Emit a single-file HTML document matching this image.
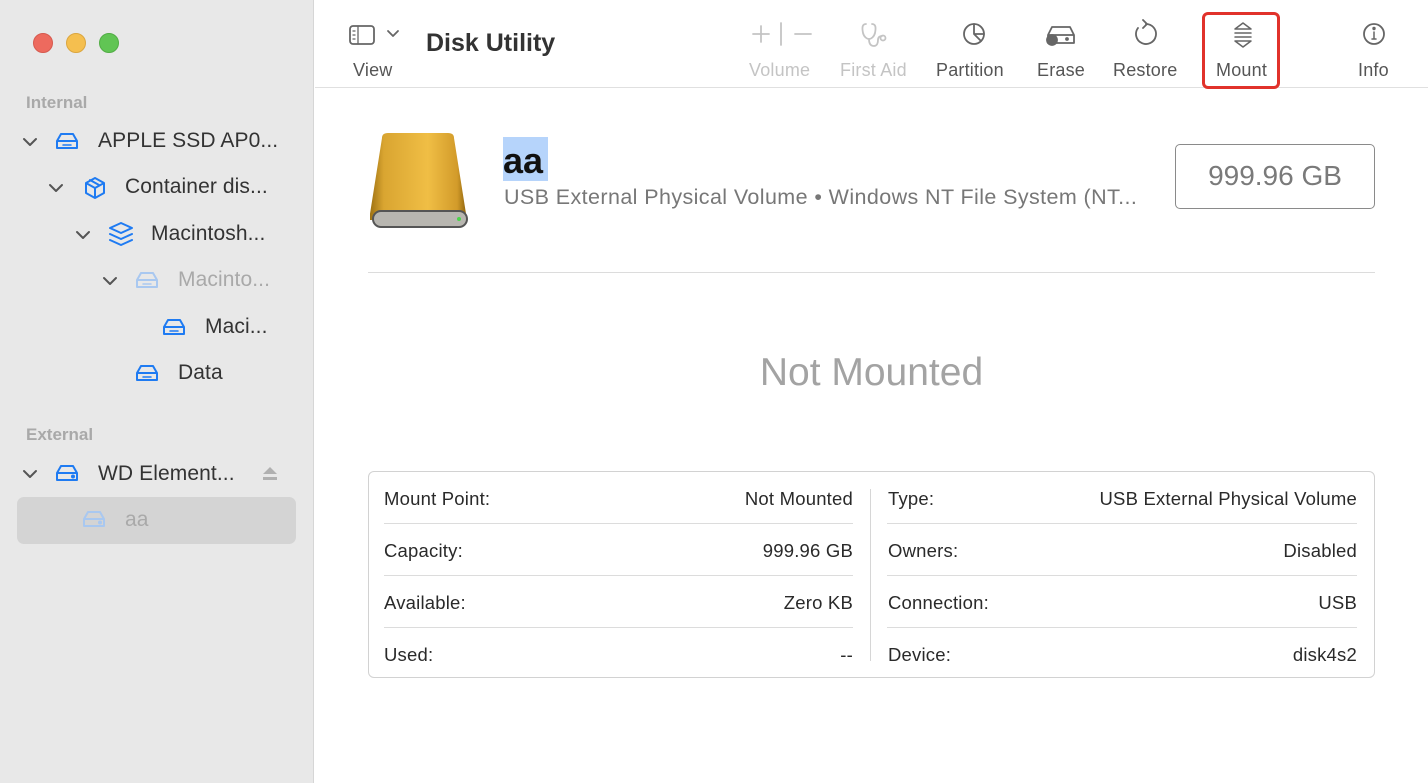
<!DOCTYPE html>
<html><head><meta charset="utf-8"><style>
*{margin:0;padding:0;box-sizing:border-box}
body{width:1428px;height:783px;background:#fff;font-family:"Liberation Sans",sans-serif;position:relative;overflow:hidden;color:#2a2a2a}
.a{position:absolute;white-space:nowrap}
#side{position:absolute;left:0;top:0;width:314px;height:783px;background:#e8e8e8;border-right:1px solid #d6d6d6}
.dot{position:absolute;top:33px;width:20px;height:20px;border-radius:50%}
.sec{font-size:17px;font-weight:bold;color:#a9a9a9}
.it{font-size:21px;color:#333;letter-spacing:0.1px}
.tb{font-size:18px;color:#555;text-align:center;letter-spacing:0.2px}
.dis{color:#c4c4c4}
.row{position:absolute;font-size:18.5px;color:#2a2a2a;letter-spacing:0.2px}
.ln{position:absolute;height:1px;background:#dcdcdc}
</style></head><body>
<div id="side">
<div class="dot" style="left:33px;background:#ed6a5e;border:1px solid #d65a4f"></div>
<div class="dot" style="left:66px;background:#f5bf4f;border:1px solid #dba63f"></div>
<div class="dot" style="left:99px;background:#61c554;border:1px solid #52ad45"></div>
<div class="a sec" style="left:26px;top:93px">Internal</div>
<div class="a sec" style="left:26px;top:425px">External</div>
<div style="position:absolute;left:17px;top:497px;width:279px;height:47px;background:#d4d4d4;border-radius:7px"></div>
</div>

<svg width="314" height="560" style="position:absolute;left:0;top:0" fill="none" stroke-linecap="round" stroke-linejoin="round">
<g stroke="#555" stroke-width="2">
<path d="M24 139l6 6 6-6"/><path d="M50 185l6 6 6-6"/><path d="M77 232l6 6 6-6"/><path d="M104 278l6 6 6-6"/><path d="M24 471l6 6 6-6"/>
</g>
<g stroke="#1f7bf2" stroke-width="2">
<path d="M57 141l4-7h12l4 7v7h-20zM57 141h20"/><path d="M63 145h8" stroke-width="1.5"/>
<path d="M95 178l9 5v10l-9 5-9-5v-10zM86 183l9 5 9-5M95 188v10M90 180l9 5"/>
<path d="M121 223l11 5-11 5-11-5zM110 234l11 5 11-5M110 240l11 5 11-5"/>
<path d="M164 327l4-7h12l4 7v7h-20zM164 327h20"/><path d="M170 331h8" stroke-width="1.5"/>
<path d="M137 373l4-7h12l4 7v7h-20zM137 373h20"/><path d="M143 377h8" stroke-width="1.5"/>
<path d="M57 473l4-7h12l4 7v7h-20zM57 473h20"/><circle cx="73" cy="476.5" r="1" fill="#1f7bf2"/>
</g>
<g stroke="#a9c8f0" stroke-width="2">
<path d="M137 280l4-7h12l4 7v7h-20zM137 280h20"/><path d="M143 284h8" stroke-width="1.5"/>
<path d="M84 519l4-7h12l4 7v7h-20zM84 519h20"/><circle cx="100" cy="522.5" r="1" fill="#a9c8f0"/>
</g>
<path d="M270 467l7 7h-14z M263 477h14v3h-14z" fill="#b0b0b0"/>
</svg>
<div class="a it" style="left:98px;top:129px">APPLE SSD AP0...</div>
<div class="a it" style="left:125px;top:175px">Container dis...</div>
<div class="a it" style="left:151px;top:222px">Macintosh...</div>
<div class="a it" style="left:178px;top:268px;color:#a9a9a9">Macinto...</div>
<div class="a it" style="left:205px;top:315px">Maci...</div>
<div class="a it" style="left:178px;top:361px">Data</div>
<div class="a it" style="left:98px;top:462px">WD Element...</div>
<div class="a it" style="left:125px;top:508px;color:#a9a9a9">aa</div>

<!-- toolbar -->
<div style="position:absolute;left:315px;top:87px;width:1113px;height:1px;background:#e0e0e0"></div>
<svg width="1113" height="60" style="position:absolute;left:315px;top:10px" fill="none" stroke-linecap="round" stroke-linejoin="round">
<g stroke="#666" stroke-width="1.8">
<rect x="35" y="16" width="24" height="18" rx="3"/><path d="M43 16v18M38 21h2M38 25h2M38 29h2" stroke-width="1.3"/>
<path d="M73 21l5 5 5-5"/>
<circle cx="659" cy="24" r="10"/><path d="M659 14v10l7 7M659 24h10"/>
<path d="M733 25l4-8h18l4 8v8h-26zM733 25h26"/><circle cx="737" cy="30" r="5" fill="#666"/><circle cx="752" cy="29" r="1" fill="#666"/>
<path d="M831 14A10 10 0 1 1 823 18"/><path d="M828 10l4 4-4 4"/>
<path d="M928 13l-8 6h16zM920 23h16M920 27h16M928 37l-8-6h16z" stroke-width="1.5"/>
<circle cx="1059" cy="24" r="10"/><path d="M1059 22v7M1057 29h4" stroke-width="1.5"/><circle cx="1059" cy="18.5" r="0.8" fill="#666"/>
</g>
<g stroke="#c4c4c4" stroke-width="1.8">
<path d="M446 16v16M438 24h16M466 13v22M480 24h16"/>
<path d="M551 14c-4 0-4 4-3 9 1 4 4 6 6 6s5-2 6-6c1-5 1-9-3-9M554 29c0 5 2 7 5 7s4-3 4-6 2-4 4-4"/><circle cx="568" cy="28" r="2.5"/>
</g>
</svg>
<div class="a" style="left:426px;top:29px;font-size:25px;font-weight:bold;color:#333">Disk Utility</div>
<div class="a tb" style="left:353px;top:60px">View</div>
<div class="a tb dis" style="left:749px;top:60px">Volume</div>
<div class="a tb dis" style="left:840px;top:60px">First Aid</div>
<div class="a tb" style="left:936px;top:60px">Partition</div>
<div class="a tb" style="left:1037px;top:60px">Erase</div>
<div class="a tb" style="left:1113px;top:60px">Restore</div>
<div class="a tb" style="left:1216px;top:60px">Mount</div>
<div class="a tb" style="left:1358px;top:60px">Info</div>
<div style="position:absolute;left:1202px;top:12px;width:78px;height:77px;border:3px solid #e1322b;border-radius:6px"></div>

<!-- header -->
<svg width="100" height="100" style="position:absolute;left:370px;top:130px">
<defs><linearGradient id="g" x1="0" x2="1"><stop offset="0" stop-color="#9a6e10"/><stop offset=".15" stop-color="#d9a531"/><stop offset=".6" stop-color="#f0be45"/><stop offset=".9" stop-color="#d29b2a"/><stop offset="1" stop-color="#8c620d"/></linearGradient></defs>
<path d="M12 8q0-5 6-5h60q6 0 6 5l13 82h-98z" fill="url(#g)"/>
<rect x="3" y="81" width="94" height="16" rx="8" fill="#b8b6b0" stroke="#555" stroke-width="2"/>
<circle cx="89" cy="89" r="2" fill="#4ad44a"/>
</svg>
<div class="a" style="left:503px;top:137px;width:45px;height:44px;background:#b6d4fb"></div>
<div class="a" style="left:503px;top:140px;font-size:36px;font-weight:bold;color:#111">aa</div>
<div class="a" style="left:504px;top:185px;font-size:21.5px;color:#777;letter-spacing:0.4px">USB External Physical Volume • Windows NT File System (NT...</div>
<div class="a" style="left:1175px;top:144px;width:200px;height:65px;border:1.5px solid #8a8a8a;border-radius:5px;font-size:28px;color:#7a7a7a;text-align:center;line-height:62px">999.96 GB</div>
<div class="ln" style="left:368px;top:272px;width:1007px"></div>
<div class="a" style="left:0;width:1743px;text-align:center;top:351px;font-size:39px;color:#a3a3a3">Not Mounted</div>

<!-- table -->
<div style="position:absolute;left:368px;top:471px;width:1007px;height:207px;border:1.5px solid #d2d2d2;border-radius:6px"></div>
<div style="position:absolute;left:870px;top:489px;width:1px;height:172px;background:#d6d6d6"></div>
<div class="ln" style="left:384px;top:523px;width:469px"></div><div class="ln" style="left:384px;top:575px;width:469px"></div><div class="ln" style="left:384px;top:627px;width:469px"></div>
<div class="ln" style="left:887px;top:523px;width:470px"></div><div class="ln" style="left:887px;top:575px;width:470px"></div><div class="ln" style="left:887px;top:627px;width:470px"></div>
<div class="row" style="left:384px;top:488px">Mount Point:</div><div class="row" style="left:384px;top:540px">Capacity:</div><div class="row" style="left:384px;top:592px">Available:</div><div class="row" style="left:384px;top:644px">Used:</div>
<div class="row" style="right:575px;top:488px">Not Mounted</div><div class="row" style="right:575px;top:540px">999.96 GB</div><div class="row" style="right:575px;top:592px">Zero KB</div><div class="row" style="right:575px;top:644px">--</div>
<div class="row" style="left:888px;top:488px">Type:</div><div class="row" style="left:888px;top:540px">Owners:</div><div class="row" style="left:888px;top:592px">Connection:</div><div class="row" style="left:888px;top:644px">Device:</div>
<div class="row" style="right:71px;top:488px">USB External Physical Volume</div><div class="row" style="right:71px;top:540px">Disabled</div><div class="row" style="right:71px;top:592px">USB</div><div class="row" style="right:71px;top:644px">disk4s2</div>
</body></html>
